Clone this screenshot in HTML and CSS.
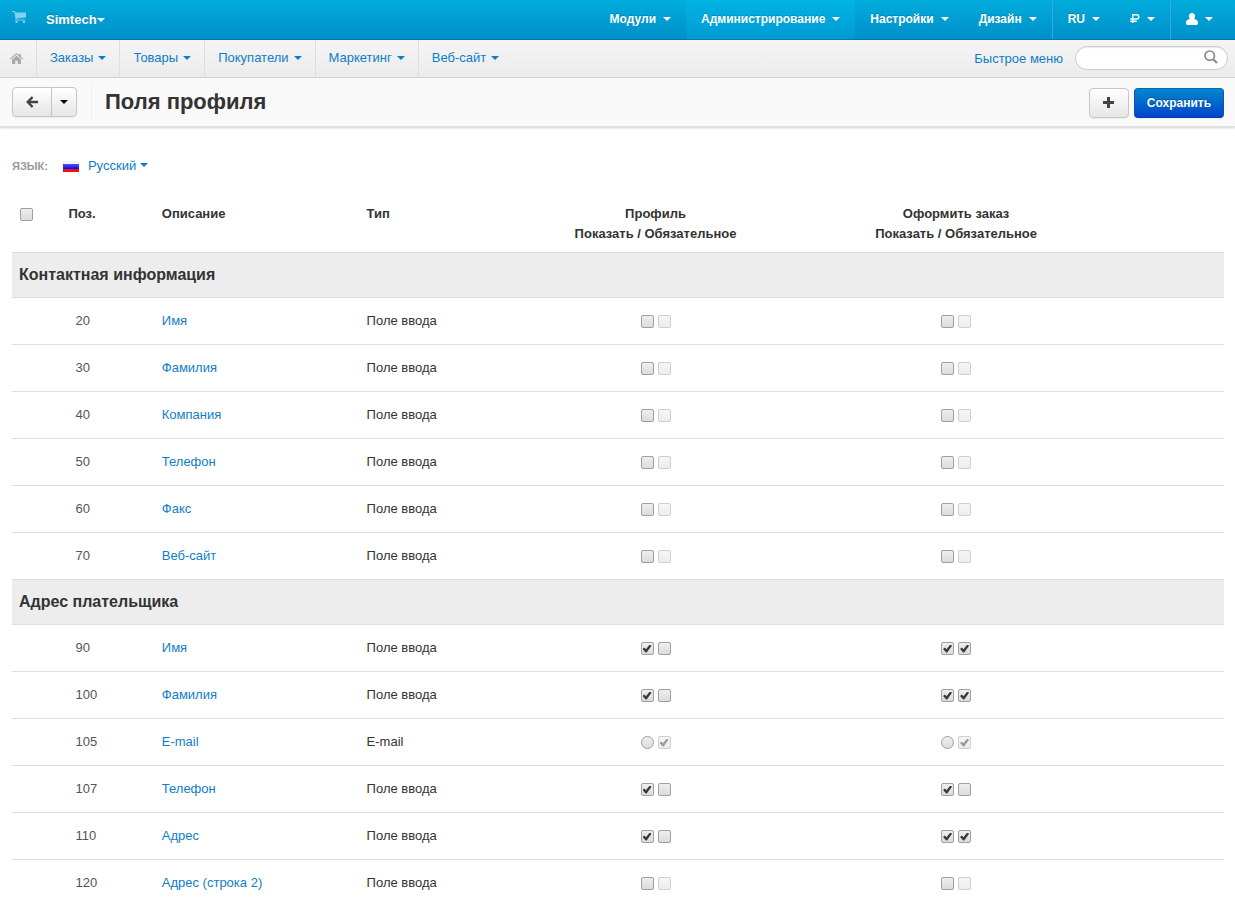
FILE: index.html
```html
<!DOCTYPE html>
<html lang="ru">
<head>
<meta charset="utf-8">
<title>Поля профиля</title>
<link rel="stylesheet" href="styles.css">
</head>
<body>
<header class="topbar">
  <a class="cart" href="#" aria-label="Витрина"><svg width="14" height="12" viewBox="0 0 14 12"><path fill="currentColor" d="M0 0h3l.4 1.500H14V6.500L4.500 7.600V8.500H13v1H3.500V7.500L2.300 1H0zM3.500 10h2v2h-2zM11 10h2v2h-2z"/></svg></a>
  <a class="brand" href="#">Simtech<span class="caret"></span></a>
  <nav class="topnav">
    <a href="#">Модули<span class="caret"></span></a>
    <a class="active" href="#">Администрирование<span class="caret"></span></a>
    <a href="#">Настройки<span class="caret"></span></a>
    <a href="#">Дизайн<span class="caret"></span></a>
    <a class="divided" href="#">RU<span class="caret"></span></a>
    <a href="#" aria-label="Валюта"><svg width="10" height="9" viewBox="0 0 10 9"><path fill="none" stroke="currentColor" stroke-width="1.400" d="M2.700 9V.7h4a2 2 0 0 1 0 4.300H.2M.2 7.200h6.500"/></svg><span class="caret"></span></a>
    <a class="divided" href="#" aria-label="Профиль"><svg width="12" height="12" viewBox="0 0 12 12"><path fill="currentColor" d="M6 0c2 0 3.100 1.300 3.100 3.200 0 1.300-.4 2.200-1.100 2.900C10.700 6.300 12 7.800 12 10.300c0 1.100-.6 1.700-1.600 1.700H1.600C.6 12 0 11.400 0 10.300c0-2.500 1.300-4 4-4.200-.7-.7-1.100-1.600-1.100-2.900C2.900 1.300 4 0 6 0z"/></svg><span class="caret"></span></a>
  </nav>
</header>
<div class="subbar">
  <nav class="subnav">
    <a class="home" href="#" aria-label="Главная"><svg width="13" height="11" viewBox="0 0 13 11"><path fill="currentColor" d="M6.500 0 9 2.200V.8h1.800v3L13 5.600l-.7.8-5.800-4.800L.7 6.400 0 5.600zM6.500 2.700 11 6.400V11H7.700V7.700H5.300V11H2V6.400z"/></svg></a>
    <a href="#">Заказы<span class="caret"></span></a>
    <a href="#">Товары<span class="caret"></span></a>
    <a href="#">Покупатели<span class="caret"></span></a>
    <a href="#">Маркетинг<span class="caret"></span></a>
    <a href="#">Веб-сайт<span class="caret"></span></a>
  </nav>
  <a class="quick" href="#">Быстрое меню</a>
  <form class="search">
    <input type="text" aria-label="Поиск">
    <button type="button" aria-label="Найти"><svg width="14" height="14" viewBox="0 0 14 14"><circle cx="5.700" cy="5.700" r="4.700" fill="none" stroke="currentColor" stroke-width="1.700"/><path stroke="currentColor" stroke-width="2" d="m9.200 9.200 3.800 3.800"/></svg></button>
  </form>
</div>
<div class="actions">
  <div class="btn-group">
    <button class="btn back" type="button" aria-label="Назад"><svg width="12" height="12" viewBox="0 0 12 12"><path fill="none" stroke="currentColor" stroke-width="2.400" d="M6.600 1 1.700 6l4.900 5M2 6h10"/></svg></button>
    <button class="btn more" type="button" aria-label="Ещё"><span class="caret"></span></button>
  </div>
  <h1>Поля профиля</h1>
  <button class="btn add" type="button" aria-label="Добавить"><svg width="12" height="12" viewBox="0 0 12 12"><path stroke="currentColor" stroke-width="3" d="M5.500 0v11M0 5.500h11"/></svg></button>
  <button class="btn primary" type="button">Сохранить</button>
</div>
<main class="content">
  <div class="language">
    <span class="language-label">Язык:</span>
    <span class="flag"></span>
    <a href="#">Русский<span class="caret"></span></a>
  </div>
  <table class="fields">
    <colgroup><col class="c-check"><col class="c-pos"><col class="c-name"><col class="c-type"><col class="c-flags"><col class="c-flags"><col></colgroup>
    <thead>
      <tr><th><input type="checkbox" aria-label="Выбрать все"></th><th>Поз.</th><th>Описание</th><th>Тип</th><th class="center">Профиль<br>Показать / Обязательное</th><th class="center">Оформить заказ<br>Показать / Обязательное</th><th></th></tr>
    </thead>
    <tbody>
      <tr class="section"><th colspan="7">Контактная информация</th></tr>
      <tr><td></td><td><input class="pos" type="text" value="20" aria-label="Поз."></td><td><a href="#">Имя</a></td><td>Поле ввода</td><td><div class="flags"><input type="checkbox" aria-label="Показать"><input type="checkbox" aria-label="Обязательное" disabled></div></td><td><div class="flags"><input type="checkbox" aria-label="Показать"><input type="checkbox" aria-label="Обязательное" disabled></div></td><td></td></tr>
      <tr><td></td><td><input class="pos" type="text" value="30" aria-label="Поз."></td><td><a href="#">Фамилия</a></td><td>Поле ввода</td><td><div class="flags"><input type="checkbox" aria-label="Показать"><input type="checkbox" aria-label="Обязательное" disabled></div></td><td><div class="flags"><input type="checkbox" aria-label="Показать"><input type="checkbox" aria-label="Обязательное" disabled></div></td><td></td></tr>
      <tr><td></td><td><input class="pos" type="text" value="40" aria-label="Поз."></td><td><a href="#">Компания</a></td><td>Поле ввода</td><td><div class="flags"><input type="checkbox" aria-label="Показать"><input type="checkbox" aria-label="Обязательное" disabled></div></td><td><div class="flags"><input type="checkbox" aria-label="Показать"><input type="checkbox" aria-label="Обязательное" disabled></div></td><td></td></tr>
      <tr><td></td><td><input class="pos" type="text" value="50" aria-label="Поз."></td><td><a href="#">Телефон</a></td><td>Поле ввода</td><td><div class="flags"><input type="checkbox" aria-label="Показать"><input type="checkbox" aria-label="Обязательное" disabled></div></td><td><div class="flags"><input type="checkbox" aria-label="Показать"><input type="checkbox" aria-label="Обязательное" disabled></div></td><td></td></tr>
      <tr><td></td><td><input class="pos" type="text" value="60" aria-label="Поз."></td><td><a href="#">Факс</a></td><td>Поле ввода</td><td><div class="flags"><input type="checkbox" aria-label="Показать"><input type="checkbox" aria-label="Обязательное" disabled></div></td><td><div class="flags"><input type="checkbox" aria-label="Показать"><input type="checkbox" aria-label="Обязательное" disabled></div></td><td></td></tr>
      <tr><td></td><td><input class="pos" type="text" value="70" aria-label="Поз."></td><td><a href="#">Веб-сайт</a></td><td>Поле ввода</td><td><div class="flags"><input type="checkbox" aria-label="Показать"><input type="checkbox" aria-label="Обязательное" disabled></div></td><td><div class="flags"><input type="checkbox" aria-label="Показать"><input type="checkbox" aria-label="Обязательное" disabled></div></td><td></td></tr>
      <tr class="section"><th colspan="7">Адрес плательщика</th></tr>
      <tr><td></td><td><input class="pos" type="text" value="90" aria-label="Поз."></td><td><a href="#">Имя</a></td><td>Поле ввода</td><td><div class="flags"><input type="checkbox" aria-label="Показать" checked><input type="checkbox" aria-label="Обязательное"></div></td><td><div class="flags"><input type="checkbox" aria-label="Показать" checked><input type="checkbox" aria-label="Обязательное" checked></div></td><td></td></tr>
      <tr><td></td><td><input class="pos" type="text" value="100" aria-label="Поз."></td><td><a href="#">Фамилия</a></td><td>Поле ввода</td><td><div class="flags"><input type="checkbox" aria-label="Показать" checked><input type="checkbox" aria-label="Обязательное"></div></td><td><div class="flags"><input type="checkbox" aria-label="Показать" checked><input type="checkbox" aria-label="Обязательное" checked></div></td><td></td></tr>
      <tr><td></td><td><input class="pos" type="text" value="105" aria-label="Поз."></td><td><a href="#">E-mail</a></td><td>E-mail</td><td><div class="flags"><input type="radio" name="profile-email" aria-label="Показать"><input type="checkbox" aria-label="Обязательное" checked disabled></div></td><td><div class="flags"><input type="radio" name="order-email" aria-label="Показать"><input type="checkbox" aria-label="Обязательное" checked disabled></div></td><td></td></tr>
      <tr><td></td><td><input class="pos" type="text" value="107" aria-label="Поз."></td><td><a href="#">Телефон</a></td><td>Поле ввода</td><td><div class="flags"><input type="checkbox" aria-label="Показать" checked><input type="checkbox" aria-label="Обязательное"></div></td><td><div class="flags"><input type="checkbox" aria-label="Показать" checked><input type="checkbox" aria-label="Обязательное"></div></td><td></td></tr>
      <tr><td></td><td><input class="pos" type="text" value="110" aria-label="Поз."></td><td><a href="#">Адрес</a></td><td>Поле ввода</td><td><div class="flags"><input type="checkbox" aria-label="Показать" checked><input type="checkbox" aria-label="Обязательное"></div></td><td><div class="flags"><input type="checkbox" aria-label="Показать" checked><input type="checkbox" aria-label="Обязательное" checked></div></td><td></td></tr>
      <tr><td></td><td><input class="pos" type="text" value="120" aria-label="Поз."></td><td><a href="#">Адрес (строка 2)</a></td><td>Поле ввода</td><td><div class="flags"><input type="checkbox" aria-label="Показать"><input type="checkbox" aria-label="Обязательное" disabled></div></td><td><div class="flags"><input type="checkbox" aria-label="Показать"><input type="checkbox" aria-label="Обязательное" disabled></div></td><td></td></tr>
    </tbody>
  </table>
</main>
</body>
</html>
```
FILE: styles.css
```css
* { box-sizing: border-box; }

body {
  margin: 0;
  height: 100vh;
  overflow: hidden;
  background: #fff;
  color: #333;
  font: 13px/20px "Liberation Sans", Arial, sans-serif;
}

a { color: #0f7ec7; text-decoration: none; }
svg { display: block; flex: none; }
input, button { font: inherit; margin: 0; }

.caret {
  display: inline-block;
  flex: none;
  border: 4px solid transparent;
  border-top-color: currentColor;
  border-bottom: 0;
}

/* Top bar */
.topbar {
  display: flex;
  height: 40px;
  padding: 0 7px 0 12px;
  background: linear-gradient(#00acdc, #0090c9);
  border-bottom: 1px solid #007bab;
  font-weight: bold;
}
.topbar a {
  display: flex;
  align-items: center;
  color: #fff;
  text-shadow: 0 -1px 0 rgba(0, 0, 0, .2);
}
.topbar .cart { align-items: flex-start; padding: 11px 0 0; margin-right: 20px; color: #80d2ee; }
.topnav { display: flex; margin-left: auto; font-size: 12px; }
.topnav a { gap: 7px; padding: 0 15px 2px; }
.topnav .active { background: linear-gradient(#00b4e3, #009ad5); }
.topnav .divided { border-left: 1px solid #35a9e0; }

/* Secondary bar */
.subbar {
  display: flex;
  align-items: center;
  height: 38px;
  padding-right: 7px;
  background: linear-gradient(#f5f5f5, #ebebeb);
  border-bottom: 1px solid #d6d6d6;
}
.subnav { display: flex; align-self: stretch; margin-right: auto; }
.subnav a {
  display: flex;
  align-items: center;
  gap: 5px;
  padding: 0 13px 2px;
  border-right: 1px solid #dedede;
}
.subnav a:last-child { border-right: 0; }
.subnav .home { padding: 0 13px 1px 10px; color: #aaa; }
.search { position: relative; width: 153px; margin: 0 0 1px 12px; }
.search input {
  display: block;
  width: 100%;
  height: 24px;
  padding: 0 30px 0 12px;
  border: 1px solid #ccc;
  border-radius: 12px;
  background: #fff;
  box-shadow: inset 0 1px 1px rgba(0, 0, 0, .08);
}
.search button {
  position: absolute;
  top: 4px;
  right: 10px;
  padding: 0;
  border: 0;
  background: none;
  color: #888;
}

/* Page heading and actions */
.actions {
  display: flex;
  align-items: center;
  height: 49px;
  padding: 0 11px 0 12px;
  background: #f9f9f9;
  border-bottom: 1px solid #e2e2e2;
  box-shadow: 0 1px 2px rgba(0, 0, 0, .2);
}
.btn-group { display: flex; }
.btn {
  display: flex;
  align-items: center;
  justify-content: center;
  height: 30px;
  padding: 0;
  border: 1px solid #c6c6c6;
  border-radius: 4px;
  background: linear-gradient(#fff, #e6e6e6);
  color: #444;
  box-shadow: 0 1px 1px rgba(0, 0, 0, .05);
}
.back { width: 40px; border-radius: 4px 0 0 4px; }
.more { width: 26px; margin-left: -1px; border-radius: 0 4px 4px 0; color: #000; }
.actions h1 {
  margin: 0 auto 0 14px;
  padding-left: 13px;
  border-left: 1px solid #f0f0f0;
  font-size: 22px;
  line-height: 36px;
}
.add, .primary { margin-top: 1px; }
.add { width: 40px; margin-right: 5px; }
.primary {
  width: 90px;
  border-color: #0f62b5 #0f50b5 #0a3da8;
  background: linear-gradient(#0088cc, #0044cc);
  color: #fff;
  font-size: 12px;
  font-weight: bold;
  text-shadow: 0 -1px 0 rgba(0, 0, 0, .25);
}

/* Content */
.content { padding: 29px 11px 0 12px; }
.language { display: flex; align-items: center; }
.language-label { color: #999; font-size: 11px; font-weight: bold; text-transform: uppercase; }
.flag {
  width: 16px;
  height: 11px;
  margin: 0 9px 0 15px;
  background: linear-gradient(#f2f2f2 3px, #5050ff 3px, #0808e8 8px, #f01010 8px);
}
.language .caret { margin-left: 4px; vertical-align: middle; margin-bottom: 3px; }

.fields { width: 100%; margin-top: 20px; border-collapse: collapse; table-layout: fixed; }
.c-check { width: 4%; }
.c-pos { width: 7.7%; }
.c-name { width: 16.9%; }
.c-type { width: 12.1%; }
.c-flags { width: 24.8%; }
.fields th, .fields td { padding: 13px 8px; text-align: left; vertical-align: top; }
.fields thead th { padding: 8px; }
.fields .center { text-align: center; }
.fields tbody tr { border-top: 1px solid #ddd; }
.fields .section th { padding: 12px 7px; background: #ededed; font-size: 16px; }
.fields .pos {
  display: block;
  width: 100%;
  height: 20px;
  padding: 0 7px;
  border: 0;
  background: none;
  color: #555;
}
.flags { display: flex; align-items: center; justify-content: center; gap: 4px; height: 20px; }

/* Tick boxes and radios */
input[type="checkbox"], input[type="radio"] {
  display: block;
  appearance: none;
  width: 13px;
  height: 13px;
  border: 1px solid #a0a0a0;
  border-radius: 2px;
  background: linear-gradient(#eee, #dcdcdc);
}
input[type="radio"] { border-radius: 50%; }
thead input[type="checkbox"] { margin-top: 4px; }
input[type="checkbox"]:checked::before {
  content: "";
  display: block;
  width: 9px;
  height: 8px;
  margin: 2px 1px;
  background: #3a3a3a;
  clip-path: polygon(0 55%, 20% 38%, 38% 58%, 80% 0, 100% 16%, 46% 100%, 34% 100%);
}
input[type="checkbox"]:disabled { opacity: .5; }
```
